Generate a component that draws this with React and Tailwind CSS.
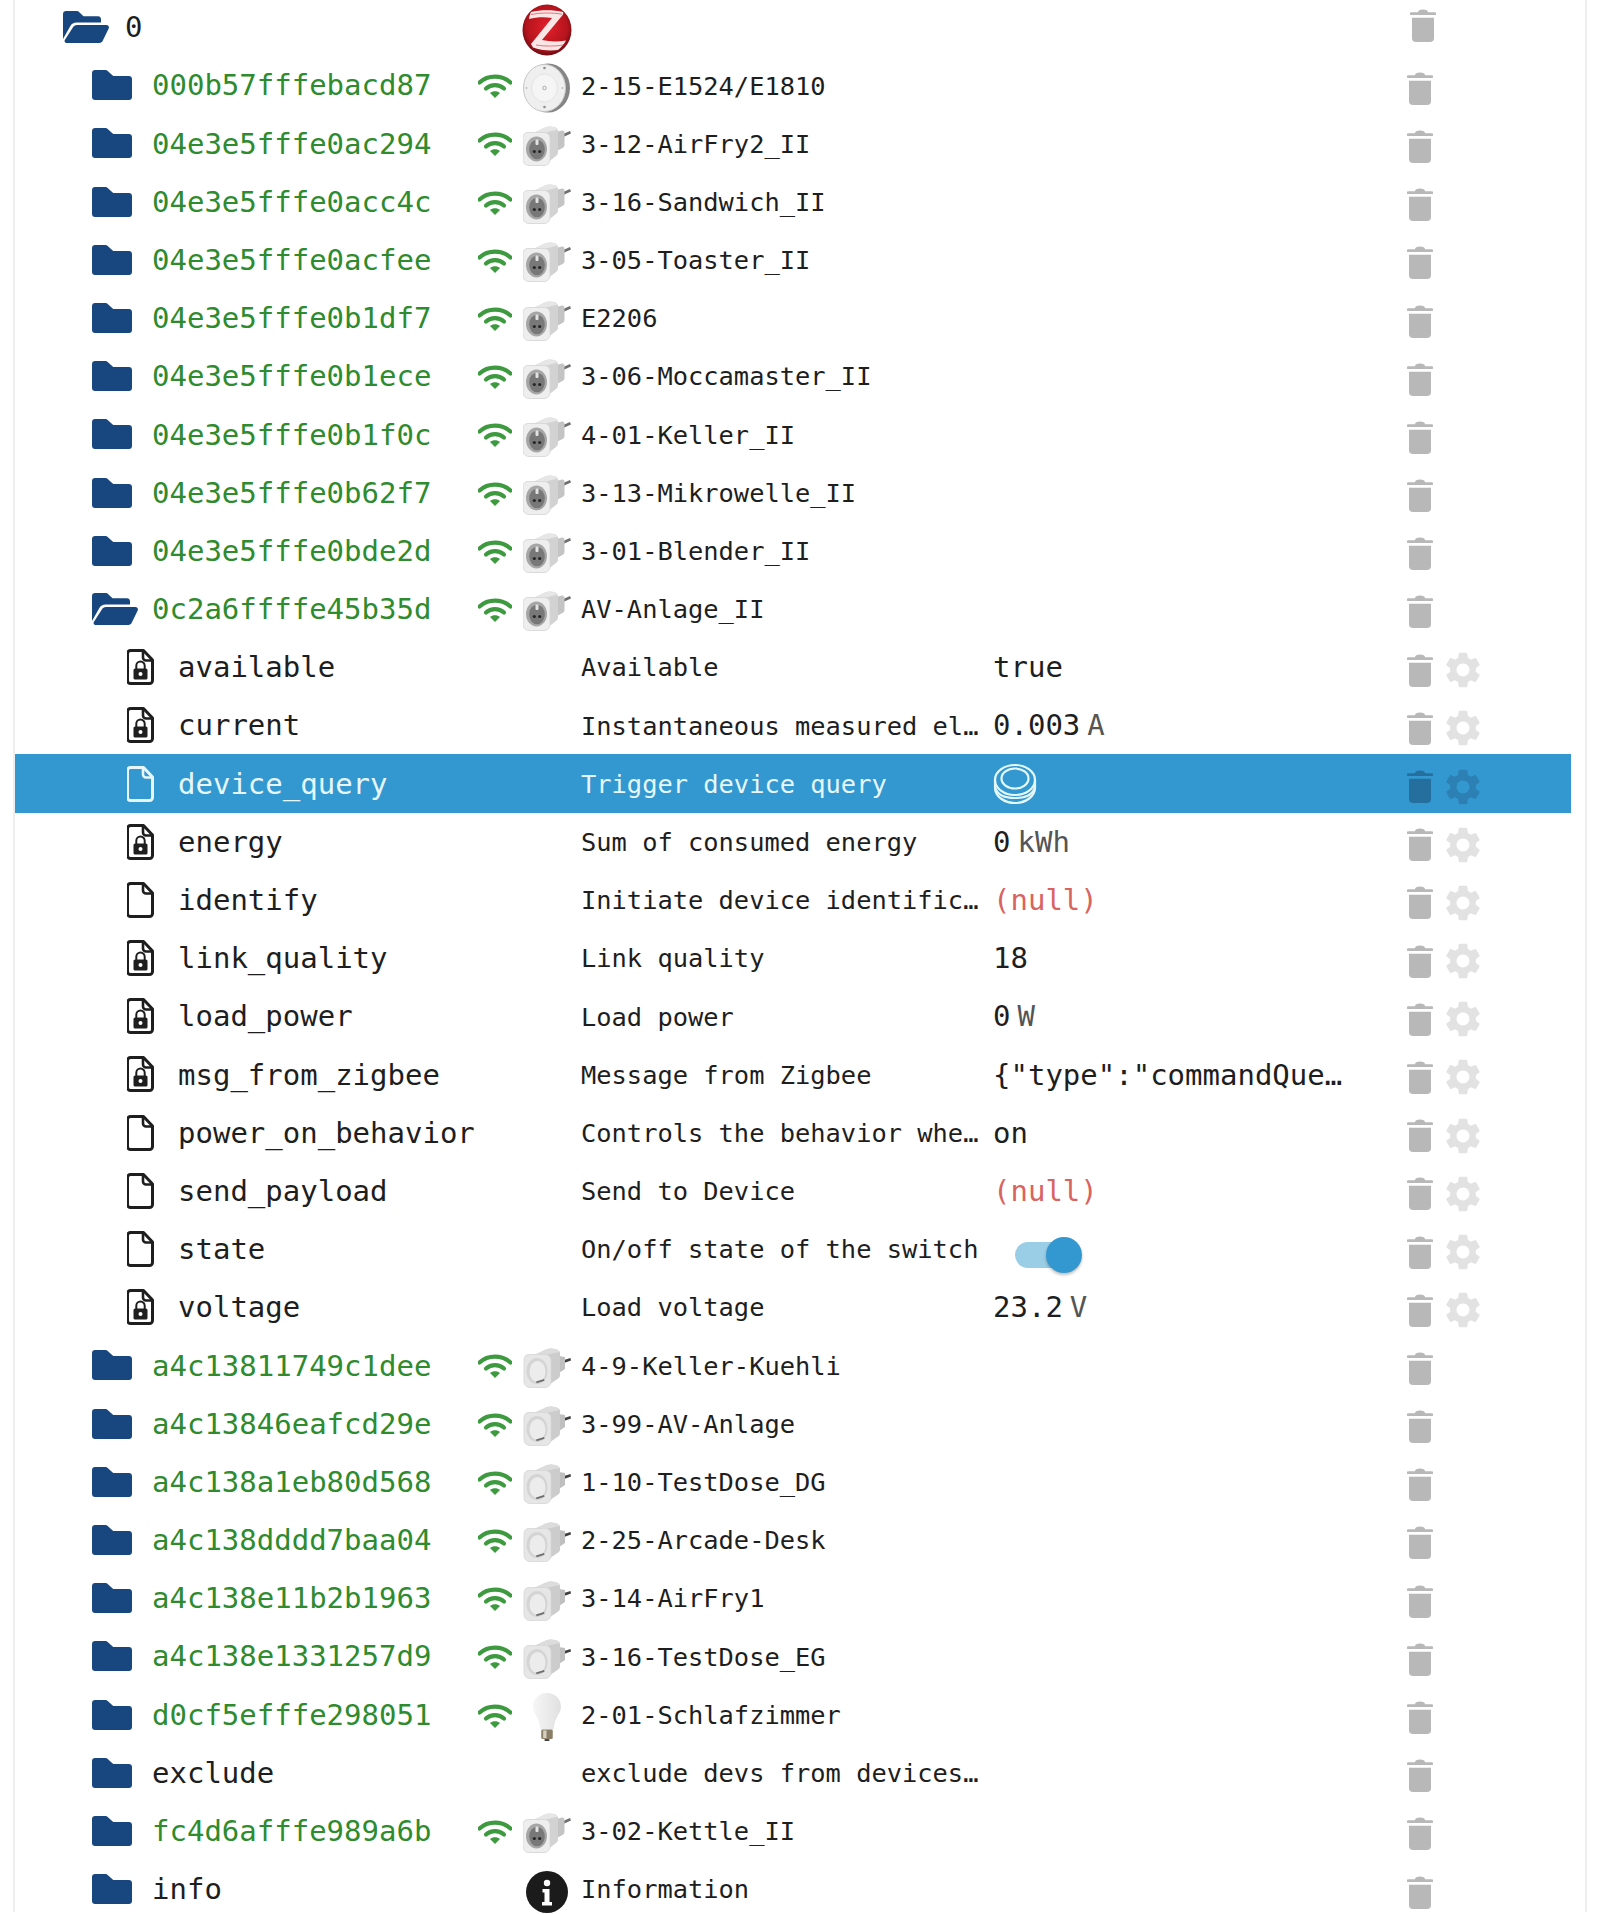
const Folder = () => (
  <svg viewBox="0 0 40 30" className="w-[40px] h-[30px] shrink-0" aria-hidden="true">
    <path d="M3 0h10.5c1 0 1.6.4 2.2 1l5.5 5H37c1.7 0 3 1.3 3 3v18c0 1.7-1.3 3-3 3H3c-1.7 0-3-1.3-3-3V3c0-1.7 1.3-3 3-3z" fill="#17477e" />
  </svg>
);

const FolderOpen = ({ className }) => (
  <svg viewBox="0 0 46 32" className={className} aria-hidden="true">
    <path d="M0 3c0-1.7 1.3-3 3-3h11c.8 0 1.5.3 2 .9l4.5 4.4H35c1.7 0 3 1.3 3 3v3.2H13.5c-2.7 0-5 1.3-6.3 3.7L0 28V3z" fill="#17477e" />
    <path d="M14 14h29.5c1.8 0 3 1.8 2.2 3.4l-6 12.4c-.6 1.3-1.8 2.2-3.3 2.2H3.5c-1.4 0-2.4-1.6-1.7-2.9L9.7 16.8C10.6 15 12.2 14 14 14z" fill="#17477e" />
  </svg>
);

const FileIcon = ({ locked, white }) => {
  const c = white ? "#e8f6fb" : "#1e1e1e";
  return (
    <svg viewBox="0 0 27 36" className="w-[27px] h-[36px] shrink-0" aria-hidden="true">
      <path d="M3.5 1.5h13l9 9.5v20.5a3 3 0 0 1-3 3h-19a3 3 0 0 1-3-3v-27a3 3 0 0 1 3-3z" fill="none" stroke={c} strokeWidth="3" strokeLinejoin="round" />
      <path d="M16 1.5v7a3 3 0 0 0 3 3h6.500" fill="none" stroke={c} strokeWidth="2.600" />
      {locked && (
        <g>
          <path d="M9.300 20v-3.200a4.200 4.200 0 0 1 8.400 0V20" fill="none" stroke={c} strokeWidth="2" />
          <rect x="6.500" y="19.500" width="14" height="11" rx="1.600" fill={c} />
          <circle cx="13.500" cy="25" r="2" fill="#fff" />
        </g>
      )}
    </svg>
  );
};

const Wifi = () => (
  <svg viewBox="0 0 34 24" className="w-[34px] h-[24px] shrink-0" aria-hidden="true">
    <path d="M1.500 8.500C10 .6 24 .6 32.500 8.500" fill="none" stroke="#3d9a3f" strokeWidth="4.200" strokeLinecap="round" />
    <path d="M8 14.500c5-4.600 13-4.600 18 0" fill="none" stroke="#3d9a3f" strokeWidth="4.200" strokeLinecap="round" />
    <path d="M17 24l-5-5c2.600-2.300 7.400-2.300 10 0z" fill="#3d9a3f" />
  </svg>
);

const Trash = ({ dark }) => (
  <svg viewBox="0 0 26 36" preserveAspectRatio="none" className="w-[26px] h-[33px] shrink-0" aria-hidden="true">
    <path d="M8 3.500C8 1.500 10 .5 13 .5s5 1 5 3h7c.6 0 1 .4 1 1v1.500c0 .3-.2.5-.5.5H.5C.2 6.500 0 6.300 0 6V4.500c0-.6.4-1 1-1z" fill={dark ? "#256f9f" : "#b8b8b8"} />
    <path d="M2 9.500h22v22.500a4 4 0 0 1-4 4H6a4 4 0 0 1-4-4z" fill={dark ? "#256f9f" : "#b8b8b8"} />
  </svg>
);

const Gear = ({ dark }) => (
  <svg viewBox="2.500 2 19 20" className="w-[34px] h-[36px] shrink-0" aria-hidden="true">
    <path
      fill={dark ? "#2d80b3" : "#e2e2e2"}
      d="M19.140 12.940c.04-.3.06-.61.06-.94 0-.32-.02-.64-.07-.94l2.030-1.580c.18-.14.23-.41.12-.61l-1.920-3.320c-.12-.22-.37-.29-.59-.22l-2.390.96c-.5-.38-1.030-.7-1.620-.94l-.36-2.540c-.04-.24-.24-.41-.48-.41h-3.840c-.24 0-.43.17-.47.41l-.36 2.540c-.59.24-1.130.57-1.620.94l-2.390-.96c-.22-.08-.47 0-.59.22L2.740 8.870c-.12.21-.08.47.12.61l2.030 1.580c-.05.3-.09.63-.09.94s.02.64.07.94l-2.030 1.580c-.18.14-.23.41-.12.61l1.920 3.320c.12.22.37.29.59.22l2.390-.96c.5.38 1.030.7 1.620.94l.36 2.540c.05.24.24.41.48.41h3.840c.24 0 .44-.17.47-.41l.36-2.540c.59-.24 1.130-.56 1.620-.94l2.390.96c.22.08.47 0 .59-.22l1.920-3.320c.12-.22.07-.47-.12-.61l-2.010-1.580zM12 15.600c-1.980 0-3.600-1.620-3.600-3.600s1.620-3.600 3.600-3.600 3.600 1.620 3.600 3.600-1.620 3.600-3.600 3.600z"
    />
  </svg>
);

const Zigbee = () => (
  <svg viewBox="0 0 50 52" className="w-[50px] h-[52px]" aria-hidden="true">
    <defs>
      <radialGradient id="zb" cx="50%" cy="45%" r="58%">
        <stop offset="0%" stopColor="#e2202a" />
        <stop offset="72%" stopColor="#b5141d" />
        <stop offset="100%" stopColor="#5c0a10" />
      </radialGradient>
    </defs>
    <ellipse cx="25" cy="26" rx="24.500" ry="25.500" fill="url(#zb)" />
    <path d="M9 8C18 5.500 32 5.500 41 8c.5 1 .3 2-.3 3L20 36c8 1.800 16 1.800 24 .5-2 4-5 7-8 9.500-8 1-18 .3-25-2.500L9 40l21-26c-7-1-15-1-23 1 .3-2 1-5 2-7z" fill="#fbe6e6" />
    <path d="M9 10.500c9-2 22-2 31-.3M14 41c9 1.500 20 1.500 29-.3" fill="none" stroke="#c9202a" strokeWidth="1" opacity="0.55" />
  </svg>
);

const Remote = () => (
  <svg viewBox="0 0 48 50" className="w-[48px] h-[50px] -ml-[2px]" aria-hidden="true">
    <ellipse cx="26" cy="25" rx="22" ry="24.500" fill="#858585" />
    <ellipse cx="22.500" cy="25" rx="21" ry="23.500" fill="#efefef" stroke="#c6c6c6" strokeWidth="1" />
    <ellipse cx="22.500" cy="25" rx="13" ry="14" fill="#f5f5f5" stroke="#e0e0e0" strokeWidth="0.800" />
    <circle cx="22.500" cy="25" r="1.800" fill="none" stroke="#8e8e8e" strokeWidth="0.700" />
    <circle cx="22.500" cy="5" r="1.300" fill="#8e8e8e" />
    <circle cx="22.500" cy="44" r="1.300" fill="#8e8e8e" />
    <circle cx="4.500" cy="25" r="0.800" fill="#999" />
    <circle cx="40.500" cy="25" r="0.800" fill="#999" />
  </svg>
);

const PlugA = () => (
  <svg viewBox="0 0 48 40" className="w-[48px] h-[40px]" aria-hidden="true">
    <path d="M38 9l9-4 1 2.500-10 4.500z" fill="#6e6e6e" />
    <path d="M33 6l6-1.500c1.500-.2 2.500.8 2.500 2.500v12c0 1.500-.8 2.400-2 3l-6 3z" fill="#c4c4c4" />
    <path d="M8 8L22 1.500c3-1.300 6-1.300 9-.5 2.500.6 4 2 4 4v21c0 2-.7 3-2 4L24 37 8 30z" fill="#d2d2d2" />
    <path d="M8 8L22 1.500c3-1.300 6-1.300 9-.5 2 .5 3.200 1.300 3.800 2.500L21 7z" fill="#e6e6e6" />
    <path d="M5 6.500h16c3.500 0 6 2.500 6 6v21c0 3.500-2.500 6-6 6H6c-3.500 0-6-2.500-6-6v-22c0-3 2-5 5-5z" fill="#eeeeee" stroke="#d4d4d4" strokeWidth="0.800" />
    <ellipse cx="13.500" cy="23" rx="10.500" ry="12.500" fill="#a6a6a6" />
    <ellipse cx="14" cy="23.500" rx="7.800" ry="9.800" fill="#787878" />
    <rect x="12.500" y="13.500" width="3" height="5.500" rx="1" fill="#e2e2e2" />
    <circle cx="11.300" cy="25.500" r="1.600" fill="#262626" />
    <circle cx="16.700" cy="25.500" r="1.600" fill="#262626" />
  </svg>
);

const PlugB = () => (
  <svg viewBox="0 0 48 40" className="w-[48px] h-[40px]" aria-hidden="true">
    <path d="M41 12l6.500-2 .5 2.500-7 2.500z" fill="#3f3f3f" />
    <path d="M36 8l6 1v12l-6 4z" fill="#bfbfbf" />
    <path d="M9 8L23 1.500c3-1.300 6-1.300 9-.5 3 .8 5 2 5 4v22c0 2-1 3-2.500 4L24 38 9 30z" fill="#cccccc" />
    <path d="M9 8L23 1.500c3-1.300 6-1.300 9-.5 2.500.7 4 1.500 4.600 3L21 7.500z" fill="#dcdcdc" />
    <path d="M6 6.500h16c3.500 0 6 2.500 6 6v21c0 3.500-2.500 6-6 6H7c-3.500 0-6-2.500-6-6v-22c0-3 2-5 5-5z" fill="#e6e6e6" stroke="#d6d6d6" strokeWidth="0.800" />
    <ellipse cx="14" cy="23" rx="10.500" ry="13" fill="#d4d4d4" />
    <ellipse cx="14.500" cy="23.500" rx="8" ry="10.500" fill="#ececec" />
    <path d="M13 33.500l8-2.500.6 1.700-8 2.500z" fill="#6e6e6e" />
  </svg>
);

const Bulb = () => (
  <svg viewBox="0 0 30 50" className="w-[30px] h-[48px]" aria-hidden="true">
    <defs>
      <linearGradient id="bb" x1="0" x2="1">
        <stop offset="0%" stopColor="#f6f6f6" />
        <stop offset="100%" stopColor="#e0e0e0" />
      </linearGradient>
    </defs>
    <path d="M15 0c8 0 14.500 6 14.500 14 0 5-2.500 8-4.500 12-1.500 3-2.500 6-3 12H8c-.5-6-1.500-9-3-12-2-4-4.500-7-4.500-12C.5 6 7 0 15 0z" fill="url(#bb)" />
    <rect x="9" y="38" width="12" height="10" rx="1.500" fill="#8a7f66" />
    <rect x="11" y="39" width="3.500" height="8" fill="#d5d0c2" />
    <rect x="12.500" y="48" width="5" height="2" fill="#444" />
  </svg>
);

const Info = () => (
  <svg viewBox="0 0 42 42" className="w-[42px] h-[42px]" aria-hidden="true">
    <circle cx="21" cy="21" r="21" fill="#1b1b1b" />
    <circle cx="21" cy="12" r="3.200" fill="#fff" />
    <path d="M16.500 18h7v13h2.500v3.500H16V31h2.500v-9.500h-2z" fill="#fff" />
  </svg>
);

const Button = () => (
  <svg viewBox="0 0 44 44" className="w-[44px] h-[44px]" aria-hidden="true">
    <path d="M2 18v8c0 8 9 15 20 15s20-7 20-15v-8" fill="none" stroke="#e4f8fb" strokeWidth="2.200" />
    <ellipse cx="22" cy="18" rx="20" ry="15" fill="none" stroke="#e4f8fb" strokeWidth="2.200" />
    <ellipse cx="22" cy="16.500" rx="13.500" ry="10" fill="none" stroke="#e4f8fb" strokeWidth="2.200" />
    <path d="M2 25c2 8 10 11 20 11s18-3 20-11" fill="none" stroke="#e4f8fb" strokeWidth="2.200" />
  </svg>
);

const Toggle = () => (
  <div className="relative w-[67px] h-[36px] ml-[22px] mt-[10px]">
    <div className="absolute left-0 top-[5px] w-[60px] h-[26px] rounded-full bg-[#9acde6]" />
    <div className="absolute right-0 top-0 w-[36px] h-[36px] rounded-full bg-[#3498d0] shadow-[0_2px_3px_rgba(0,0,0,0.25)]" />
  </div>
);

const Row = ({ indent, icon, name, green, wifi, pic, desc, value, gear, selected, trashClass = "mt-[6px]" }) => (
  <div
    className={`flex items-center h-[58.2px] w-[1556px] ${selected ? "bg-[#3498d0] text-[#e6f7fb]" : "text-[#1e1e1e]"}`}
  >
    <div className={`flex items-center shrink-0 w-[463px] ${indent}`}>
      {icon}
      <span className={`text-[29px] leading-[1.2] mt-[1px] whitespace-nowrap ${green ? "text-[#2e8b2e]" : ""} ${name === "0" ? "ml-[16px]" : icon.type === FileIcon ? "ml-[24px]" : "ml-[20px]"}`}>
        {name}
      </span>
    </div>
    <div className="w-[34px] shrink-0 flex justify-center mt-[2px]">{wifi && <Wifi />}</div>
    <div className="w-[69px] shrink-0 flex justify-center h-[50px] items-center mt-[5px]">{pic}</div>
    <div className="w-[412px] shrink-0 text-[25.4px] leading-[1.2] mt-[1px] whitespace-nowrap">{desc}</div>
    <div className="w-[414px] shrink-0 text-[29px] leading-[1.2] mt-[1px] whitespace-nowrap">{value}</div>
    <div className={`flex items-center gap-[13px] shrink-0 ${trashClass}`}>
      <Trash dark={selected} />
      {gear && <Gear dark={selected} />}
    </div>
  </div>
);

const Unit = ({ n, u }) => (
  <span>
    {n}
    <span className="text-[#555] ml-[7px]">{u}</span>
  </span>
);

const Null = () => <span className="text-[#d9635f]">(null)</span>;

const device = [
  ["000b57fffebacd87", <Remote />, "2-15-E1524/E1810"],
  ["04e3e5fffe0ac294", <PlugA />, "3-12-AirFry2_II"],
  ["04e3e5fffe0acc4c", <PlugA />, "3-16-Sandwich_II"],
  ["04e3e5fffe0acfee", <PlugA />, "3-05-Toaster_II"],
  ["04e3e5fffe0b1df7", <PlugA />, "E2206"],
  ["04e3e5fffe0b1ece", <PlugA />, "3-06-Moccamaster_II"],
  ["04e3e5fffe0b1f0c", <PlugA />, "4-01-Keller_II"],
  ["04e3e5fffe0b62f7", <PlugA />, "3-13-Mikrowelle_II"],
  ["04e3e5fffe0bde2d", <PlugA />, "3-01-Blender_II"],
];

const states = [
  ["available", true, "Available", "true"],
  ["current", true, "Instantaneous measured el…", <Unit n="0.003" u="A" />],
  ["device_query", false, "Trigger device query", <Button />],
  ["energy", true, "Sum of consumed energy", <Unit n="0" u="kWh" />],
  ["identify", false, "Initiate device identific…", <Null />],
  ["link_quality", true, "Link quality", "18"],
  ["load_power", true, "Load power", <Unit n="0" u="W" />],
  ["msg_from_zigbee", true, "Message from Zigbee", '{"type":"commandQue…'],
  ["power_on_behavior", false, "Controls the behavior whe…", "on"],
  ["send_payload", false, "Send to Device", <Null />],
  ["state", false, "On/off state of the switch", <Toggle />],
  ["voltage", true, "Load voltage", <Unit n="23.2" u="V" />],
];

const after = [
  ["a4c13811749c1dee", <PlugB />, "4-9-Keller-Kuehli"],
  ["a4c13846eafcd29e", <PlugB />, "3-99-AV-Anlage"],
  ["a4c138a1eb80d568", <PlugB />, "1-10-TestDose_DG"],
  ["a4c138dddd7baa04", <PlugB />, "2-25-Arcade-Desk"],
  ["a4c138e11b2b1963", <PlugB />, "3-14-AirFry1"],
  ["a4c138e1331257d9", <PlugB />, "3-16-TestDose_EG"],
  ["d0cf5efffe298051", <Bulb />, "2-01-Schlafzimmer"],
];

export default function App() {
  return (
    <div className="h-[1914px] w-[1600px] overflow-hidden bg-white font-['DejaVu_Sans_Mono',monospace]">
      <div className="ml-[13px] w-[1574px] h-full border-x-[2px] border-[#eeeeee] mt-[-2px]">
        <Row
          indent="pl-[48px]"
          icon={<FolderOpen className="w-[46px] h-[32px] shrink-0" />}
          name="0"
          pic={<Zigbee />}
          trashClass="ml-[3px] mt-[-3px]"
        />
        {device.map(([n, p, d]) => (
          <Row key={n} indent="pl-[77px]" icon={<Folder />} name={n} green wifi pic={p} desc={d} />
        ))}
        <Row
          indent="pl-[77px]"
          icon={<FolderOpen className="w-[46px] h-[32px] shrink-0 -mr-[6px]" />}
          name="0c2a6ffffe45b35d"
          green
          wifi
          pic={<PlugA />}
          desc="AV-Anlage_II"
        />
        {states.map(([n, locked, d, v]) => (
          <Row
            key={n}
            indent="pl-[112px]"
            icon={<FileIcon locked={locked} white={n === "device_query"} />}
            name={n}
            desc={d}
            value={v}
            gear
            selected={n === "device_query"}
          />
        ))}
        {after.map(([n, p, d]) => (
          <Row key={n} indent="pl-[77px]" icon={<Folder />} name={n} green wifi pic={p} desc={d} />
        ))}
        <Row indent="pl-[77px]" icon={<Folder />} name="exclude" desc="exclude devs from devices…" />
        <Row indent="pl-[77px]" icon={<Folder />} name="fc4d6afffe989a6b" green wifi pic={<PlugA />} desc="3-02-Kettle_II" />
        <Row indent="pl-[77px]" icon={<Folder />} name="info" pic={<Info />} desc="Information" />
      </div>
    </div>
  );
}
